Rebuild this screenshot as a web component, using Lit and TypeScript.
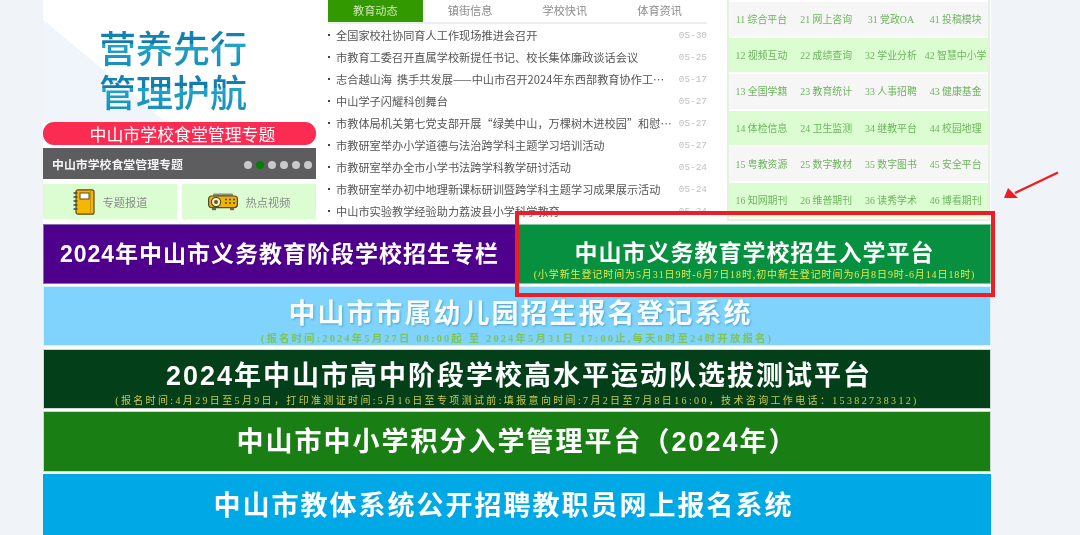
import { LitElement, html, css } from "lit";
import { customElement } from "lit/decorators.js";

const news = [
  ["全国家校社协同育人工作现场推进会召开", "05-30"],
  ["市教育工委召开直属学校新提任书记、校长集体廉政谈话会议", "05-25"],
  ["志合越山海\u00a0\u00a0携手共发展——中山市召开2024年东西部教育协作工作推进会议", "05-17"],
  ["中山学子闪耀科创舞台", "05-27"],
  ["市教体局机关第七党支部开展“绿美中山，万棵树木进校园”和慰问活动", "05-27"],
  ["市教研室举办小学道德与法治跨学科主题学习培训活动", "05-27"],
  ["市教研室举办全市小学书法跨学科教学研讨活动", "05-24"],
  ["市教研室举办初中地理新课标研训暨跨学科主题学习成果展示活动", "05-24"],
  ["中山市实验教学经验助力荔波县小学科学教育", "05-24"],
];

const links = [
  ["11 综合平台", "21 网上咨询", "31 党政OA", "41 投稿模块"],
  ["12 视频互动", "22 成绩查询", "32 学业分析", "42 智慧中小学"],
  ["13 全国学籍", "23 教育统计", "33 人事招聘", "43 健康基金"],
  ["14 体检信息", "24 卫生监测", "34 继教平台", "44 校园地理"],
  ["15 粤教资源", "25 数字教材", "35 数字图书", "45 安全平台"],
  ["16 知网期刊", "26 维普期刊", "36 读秀学术", "46 博看期刊"],
];

@customElement("app-root")
export class AppRoot extends LitElement {
  static styles = css`
    :host {
      display: block;
      position: relative;
      width: 1080px;
      height: 535px;
      overflow: hidden;
      background: #f0f4f8;
      font-family: "Liberation Serif", "Noto Sans CJK SC", sans-serif;
    }
    .page {
      width: 948px;
      height: 535px;
      margin-left: 43px;
      background: #fff;
      overflow: hidden;
      filter: blur(0.45px);
    }
    .top {
      display: flex;
      height: 223px;
    }
    .left {
      width: 273px;
      flex: none;
      display: flex;
      flex-direction: column;
    }
    .hero {
      height: 145px;
      display: flex;
      flex-direction: column;
      background: linear-gradient(to top right, #f0f5fb 50%, transparent 50.4%) no-repeat 0 20px / 122px 102px;
    }
    .hero-title {
      height: 122px;
      box-sizing: border-box;
      padding: 25px 0 0 56px;
      font-family: "Noto Sans CJK SC", sans-serif;
      font-size: 37px;
      font-weight: 500;
      line-height: 44px;
      color: #1a86b5;
      background: linear-gradient(#22a5c9, #1278ad);
      background-size: 100% 44px;
      -webkit-background-clip: text;
      background-clip: text;
      -webkit-text-fill-color: transparent;
    }
    .pill {
      height: 23px;
      box-sizing: border-box;
      padding-left: 6px;
      border-radius: 11px;
      background: #fb2b52;
      color: #fff;
      text-align: center;
      font-family: "Noto Sans CJK SC", sans-serif;
      font-size: 16.9px;
      line-height: 23px;
    }
    .caption {
      margin-top: 3px;
      height: 31px;
      background: #5d5d60;
      display: flex;
      align-items: center;
      justify-content: space-between;
      padding: 0 4px 0 9px;
      color: #f4f4f4;
      font-family: "Noto Sans CJK SC", sans-serif;
      font-size: 11.9px;
      font-weight: 700;
    }
    .dots {
      display: flex;
      gap: 4px;
      margin-top: 2px;
    }
    .dot {
      width: 8px;
      height: 8px;
      border-radius: 50%;
      background: #c9c9c9;
    }
    .dot.on {
      background: #008000;
    }
    .tiles {
      margin-top: 5px;
      display: flex;
      gap: 5px;
    }
    .tile {
      width: 134px;
      height: 35px;
      background: #dcfdd2;
      display: flex;
      align-items: center;
      justify-content: center;
      gap: 8px;
      color: #8a8a8a;
      font-family: "Noto Sans CJK SC", sans-serif;
      font-size: 11.2px;
    }
    .tile svg {
      flex: none;
      display: block;
    }
    .news {
      width: 379px;
      margin-left: 12px;
      flex: none;
      font-family: "Noto Sans CJK SC", sans-serif;
      font-size: 11.2px;
      overflow: hidden;
    }
    .tabs {
      display: grid;
      grid-template-columns: repeat(4, 1fr);
      height: 22px;
      border-bottom: 2px solid #eee;
    }
    .tab {
      text-align: center;
      line-height: 21px;
      color: #8c8c8c;
    }
    .tab.on {
      background: #339900;
      color: #cfe6b8;
    }
    .row {
      display: flex;
      align-items: center;
      height: 22px;
      color: #555;
    }
    .bullet {
      width: 2px;
      height: 2px;
      margin-right: 6px;
      flex: none;
      background: #444;
    }
    .row-t {
      width: 336px;
      flex: none;
      white-space: nowrap;
      overflow: hidden;
      text-overflow: ellipsis;
    }
    .row-d {
      margin-left: auto;
      color: #c0c0c0;
      font-family: "Liberation Mono", monospace;
      font-size: 9.4px;
    }
    .links {
      width: 263px;
      height: 221px;
      box-sizing: border-box;
      margin-left: 20px;
      flex: none;
      border: 2px solid #e3f3dd;
      border-top: 0;
      padding: 2px 0 0;
      display: flex;
      flex-direction: column;
      gap: 2px;
    }
    .lrow {
      height: 34.2px;
      flex: none;
      display: grid;
      grid-template-columns: repeat(4, 1fr);
      align-items: center;
      text-align: center;
      font-size: 9.9px;
      color: #6cb45c;
      background: #f6f6f6;
    }
    .lrow:nth-child(even) {
      background: #dcfdd2;
    }
    .banners {
      display: flex;
      flex-direction: column;
      gap: 2px;
    }
    .split {
      display: flex;
      margin-top: 1px;
    }
    .banner {
      height: 60px;
      box-sizing: border-box;
      display: flex;
      flex-direction: column;
      align-items: center;
      color: #fff;
      font-weight: 700;
      border: 1px solid #cfd6cf;
      white-space: nowrap;
    }
    .title {
      font-family: "Liberation Sans", "Noto Sans CJK SC", sans-serif;
      font-size: 27px;
      letter-spacing: 2px;
      line-height: 30px;
    }
    .title.small {
      font-size: 23px;
      letter-spacing: 1px;
    }
    .sub {
      font-weight: 400;
      font-size: 10px;
      line-height: 12px;
    }
    .purple {
      width: 476px;
      background: #4e008c;
      padding: 14px 0 0 0;
      border-color: #8a6fb0;
      border-right: 0;
    }
    .purple .title {
      margin-right: 4px;
    }
    .green {
      width: 472px;
      background: #07903f;
      padding-top: 13px;
      border-color: #7fc59b;
      border-left: 0;
    }
    .green .sub {
      margin-top: 1px;
      color: #e8e84a;
      letter-spacing: 0.9px;
    }
    .sky {
      background: #7fd3fd;
      padding-top: 12px;
      border-color: #d8f0fc;
    }
    .sky .title {
      color: #f6fcff;
      text-shadow: 1px 1px 2px #4aa7c8;
      margin-left: 7px;
    }
    .sky .sub {
      margin-top: 4px;
      color: #7fc552;
      font-size: 10.4px;
      letter-spacing: 2.17px;
      font-weight: 700;
    }
    .forest {
      background: #03401a;
      padding-top: 11px;
      margin-top: 1px;
    }
    .forest .title {
      margin-left: 4px;
    }
    .forest .sub {
      margin-top: 4px;
      color: #c9c94a;
      letter-spacing: 2.35px;
    }
    .leaf {
      background: #197f15;
      padding-top: 15px;
      height: 61px;
    }
    .ocean {
      background: #00a9e6;
      padding-top: 17px;
      height: 61px;
      border: 0;
    }
    .ocean .title {
      margin-right: 27px;
    }
    .frame {
      position: absolute;
      left: 515px;
      top: 211px;
      width: 480px;
      height: 85.5px;
      box-sizing: border-box;
      border: 4px solid #ee1c25;
    }
    .arrow {
      position: absolute;
      left: 1000px;
      top: 168px;
    }
  `;

  render() {
    return html`
      <div class="page">
        <div class="top">
          <div class="left">
            <div class="hero">
              <div class="hero-title">营养先行<br />管理护航</div>
              <div class="pill">中山市学校食堂管理专题</div>
            </div>
            <div class="caption">
              <span>中山市学校食堂管理专题</span>
              <div class="dots">
                ${[0, 1, 2, 3, 4, 5].map((i) => html`<span class="dot ${i === 1 ? "on" : ""}"></span>`)}
              </div>
            </div>
            <div class="tiles">
              <div class="tile">
                <svg width="22" height="26" viewBox="0 0 22 26">
                  <rect x="3" y="0.8" width="18" height="24.4" rx="2" fill="#f5b800" stroke="#5a4a20" stroke-width="1.2" />
                  <rect x="7" y="4" width="9" height="6" fill="#fff" stroke="#5a4a20" stroke-width="1" />
                  <path d="M17.5 1v24" stroke="#c98f00" stroke-width="1" />
                  <path d="M0.5 4h4M0.5 8h4M0.5 12h4M0.5 16h4M0.5 20h4" stroke="#444" stroke-width="1.4" />
                </svg>
                <span>专题报道</span>
              </div>
              <div class="tile">
                <svg width="30" height="18" viewBox="0 0 30 18">
                  <rect x="5" y="0.5" width="20" height="3" rx="1" fill="#8a8a7c" />
                  <rect x="0.6" y="3" width="28.8" height="11.6" rx="3" fill="#f2b300" stroke="#4d4a38" stroke-width="1.2" />
                  <circle cx="8" cy="9" r="4.6" fill="#fff3c4" stroke="#4d4a38" stroke-width="1.2" />
                  <circle cx="8" cy="9" r="2" fill="#6b5a20" />
                  <path d="M17 6.5h2M21 6.5h2M25 6.5h2M17 10h2M21 10h2M25 10h2" stroke="#4d4a38" stroke-width="1.6" />
                  <rect x="4" y="14.6" width="4" height="2.6" fill="#666" />
                  <rect x="22" y="14.6" width="4" height="2.6" fill="#666" />
                </svg>
                <span>热点视频</span>
              </div>
            </div>
          </div>
          <div class="news">
            <div class="tabs">
              <div class="tab on">教育动态</div>
              <div class="tab">镇街信息</div>
              <div class="tab">学校快讯</div>
              <div class="tab">体育资讯</div>
            </div>
            <div>
              ${news.map(
                ([t, d]) => html`<div class="row">
                  <span class="bullet"></span><span class="row-t">${t}</span><span class="row-d">${d}</span>
                </div>`
              )}
            </div>
          </div>
          <div class="links">
            ${links.map((r) => html`<div class="lrow">${r.map((c) => html`<span>${c}</span>`)}</div>`)}
          </div>
        </div>
        <div class="banners">
          <div class="split">
            <div class="banner purple"><div class="title small">2024年中山市义务教育阶段学校招生专栏</div></div>
            <div class="banner green">
              <div class="title small">中山市义务教育学校招生入学平台</div>
              <div class="sub">(小学新生登记时间为5月31日9时-6月7日18时,初中新生登记时间为6月8日9时-6月14日18时)</div>
            </div>
          </div>
          <div class="banner sky">
            <div class="title">中山市市属幼儿园招生报名登记系统</div>
            <div class="sub">(报名时间:2024年5月27日 08:00起 至 2024年5月31日 17:00止,每天8时至24时开放报名)</div>
          </div>
          <div class="banner forest">
            <div class="title">2024年中山市高中阶段学校高水平运动队选拔测试平台</div>
            <div class="sub">(报名时间:4月29日至5月9日，打印准测证时间:5月16日至专项测试前:填报意向时间:7月2日至7月8日16:00，技术咨询工作电话：15382738312)</div>
          </div>
          <div class="banner leaf"><div class="title">中山市中小学积分入学管理平台（2024年）</div></div>
          <div class="banner ocean"><div class="title">中山市教体系统公开招聘教职员网上报名系统</div></div>
        </div>
      </div>
      <div class="frame"></div>
      <svg class="arrow" width="62" height="34" viewBox="0 0 62 34">
        <path d="M58 4.5 L15 25" stroke="#ee1c25" stroke-width="2.4" fill="none" />
        <path d="M4 30 L8 20 L18 30 Z" fill="#ee1c25" />
      </svg>
    `;
  }
}
